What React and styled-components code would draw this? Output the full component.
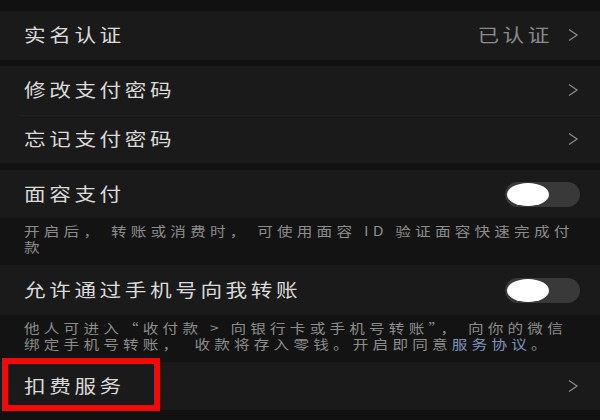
import React from "react";
import styled, { createGlobalStyle } from "styled-components";

const Global = createGlobalStyle`
  html, body { margin: 0; padding: 0; background: #111111; overflow: hidden; }
  body { font-family: "Noto Sans CJK SC", "Noto Sans", sans-serif; }
`;

const Page = styled.div`
  width: 600px;
  height: 420px;
  background: #111111;
  padding-top: 11px;
  box-sizing: border-box;
  display: flex;
  flex-direction: column;
  overflow: hidden;
`;

const Group = styled.div`
  background: #1a1a1a;
  display: flex;
  flex-direction: column;
  flex-shrink: 0;
  margin-bottom: ${(p) => p.$gap || 0}px;
`;

const Row = styled.div`
  position: relative;
  flex-shrink: 0;
  height: ${(p) => p.$h || 48}px;
  box-sizing: border-box;
  display: flex;
  align-items: center;
  justify-content: space-between;
  padding: 0 20px 3px 24px;
  background: #1a1a1a;
`;

const Divider = styled.div`
  height: 1px;
  margin-left: 20px;
  background: #262626;
`;

const Label = styled.span`
  display: inline-block;
  font-size: 18px;
  letter-spacing: 3px;
  line-height: 20px;
  color: #dadada;
  white-space: nowrap;
  transform: scaleX(1.2);
  transform-origin: left center;
`;

const Right = styled.div`
  display: flex;
  align-items: center;
  gap: 14px;
`;

const Value = styled.span`
  display: inline-block;
  font-size: 18px;
  letter-spacing: 3px;
  line-height: 20px;
  color: #8a8a8a;
  white-space: nowrap;
  transform: scaleX(1.2);
  transform-origin: right center;
`;

const ChevronSvg = styled.svg`
  margin-right: 1px;
  margin-top: 2px;
`;

const Chevron = () => (
  <ChevronSvg width="12" height="14" viewBox="0 0 12 14">
    <polyline
      points="2,1.5 10,7 2,12.5"
      fill="none"
      stroke="#858585"
      strokeWidth="1.4"
    />
  </ChevronSvg>
);

const Track = styled.div`
  width: 75px;
  height: 25px;
  border-radius: 13px;
  background: #393939;
  display: flex;
  align-items: center;
  padding: 0 2px;
  box-sizing: border-box;
  margin-top: 3px;
`;

const Knob = styled.div`
  width: 42px;
  height: 23px;
  border-radius: 50%;
  background: #ffffff;
`;

const Desc = styled.div`
  flex-shrink: 0;
  background: #131313;
  padding: 5px 0 10px 24px;
  overflow: hidden;
`;

const DescText = styled.div`
  width: max-content;
  font-size: 13px;
  letter-spacing: 3.5px;
  line-height: 16px;
  color: #8c8c8c;
  white-space: nowrap;
  transform: scaleX(1.2);
  transform-origin: left center;
`;

const Link = styled.span`
  color: #7f93bd;
`;

const Highlight = styled.div`
  position: absolute;
  left: 2px;
  top: -4px;
  width: 158px;
  height: 53px;
  border: 6px solid #f20a0a;
  box-sizing: border-box;
  pointer-events: none;
`;

const Toggle = () => (
  <Track>
    <Knob />
  </Track>
);

export default function App() {
  return (
    <>
      <Global />
      <Page>
        <Group $gap={6}>
          <Row $h={49}>
            <Label>实名认证</Label>
            <Right>
              <Value>已认证</Value>
              <Chevron />
            </Right>
          </Row>
        </Group>
        <Group $gap={7}>
          <Row $h={49}>
            <Label>修改支付密码</Label>
            <Chevron />
          </Row>
          <Divider />
          <Row $h={47}>
            <Label>忘记支付密码</Label>
            <Chevron />
          </Row>
        </Group>
        <Row $h={48}>
          <Label>面容支付</Label>
          <Toggle />
        </Row>
        <Desc>
          <DescText>
            开启后， 转账或消费时， 可使用面容 ID 验证面容快速完成付
            <br />款
          </DescText>
        </Desc>
        <Row $h={50}>
          <Label>允许通过手机号向我转账</Label>
          <Toggle />
        </Row>
        <Desc>
          <DescText>
            他人可进入“收付款 &gt; 向银行卡或手机号转账”， 向你的微信
            <br />
            绑定手机号转账，　收款将存入零钱。开启即同意<Link>服务协议</Link>。
          </DescText>
        </Desc>
        <Row $h={48}>
          <Label>扣费服务</Label>
          <Chevron />
          <Highlight />
        </Row>
      </Page>
    </>
  );
}
